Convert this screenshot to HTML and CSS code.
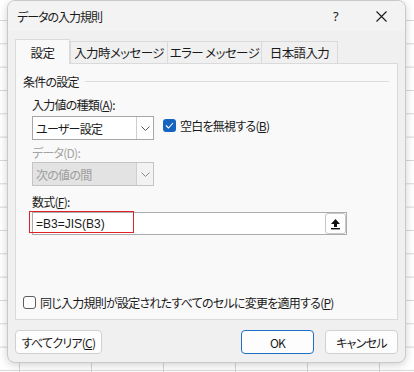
FILE: index.html
```html
<!DOCTYPE html>
<html lang="ja">
<head>
<meta charset="utf-8">
<title>データの入力規則</title>
<link rel="stylesheet" href="styles.css">
</head>
<body>
<div class="dialog">
  <div class="titlebar">
    <span class="title">データの入力規則</span>
    <span class="help">?</span>
    <svg class="close" width="11" height="11" viewBox="0 0 11 11"><path d="M0.5 0.5 L10.5 10.5 M10.5 0.5 L0.5 10.5" stroke="#1a1a1a" stroke-width="1.1" fill="none"/></svg>
  </div>
  <div class="body">
    <div class="tabs">
      <div class="tab active">設定</div>
      <div class="tab t2">入力時メッセージ</div>
      <div class="tab t3">エラー メッセージ</div>
      <div class="tab t4">日本語入力</div>
    </div>
    <div class="panel">
      <div class="legend"><span>条件の設定</span><span class="rule"></span></div>
      <div class="group">
        <div class="label l1">入力値の種類(<u>A</u>):</div>
        <div class="row">
          <div class="select">
            <span class="value">ユーザー設定</span>
            <span class="drop"><svg width="9" height="5" viewBox="0 0 9 5"><path d="M0.5 0.5 L4.5 4.5 L8.5 0.5" stroke="#555" stroke-width="1" fill="none"/></svg></span>
          </div>
          <label class="check on"><span class="box"><svg width="9" height="7" viewBox="0 0 9 7"><path d="M1 3.5 L3.5 6 L8 1" stroke="#fff" stroke-width="1.1" fill="none"/></svg></span><span>空白を無視する(<u>B</u>)</span></label>
        </div>
        <div class="label disabled l2">データ(D):</div>
        <div class="select dis">
          <span class="value">次の値の間</span>
          <span class="drop"><svg width="9" height="5" viewBox="0 0 9 5"><path d="M0.5 0.5 L4.5 4.5 L8.5 0.5" stroke="#8a8a8a" stroke-width="1" fill="none"/></svg></span>
        </div>
        <div class="label l3">数式(<u>F</u>):</div>
        <div class="formula">
          <span class="ftext">=B3=JIS(B3)</span>
          <span class="pick"><svg width="11" height="12" viewBox="0 0 11 12"><path d="M5.5 1 L10 6 L7 6 L7 9 L4 9 L4 6 L1 6 Z" fill="#111"/><rect x="1" y="10" width="9" height="1.4" fill="#111"/></svg></span>
          <span class="mark"></span>
        </div>
      </div>
      <label class="check off bottom"><span class="box"></span><span>同じ入力規則が設定されたすべてのセルに変更を適用する(<u>P</u>)</span></label>
    </div>
    <div class="buttons">
      <button class="btn clear">すべてクリア(<u>C</u>)</button>
      <span class="spacer"></span>
      <button class="btn ok">OK</button>
      <button class="btn cancel">キャンセル</button>
    </div>
  </div>
</div>
</body>
</html>
```

FILE: styles.css
```css
html, body {
  margin: 0;
  padding: 0;
}
body {
  width: 414px;
  height: 372px;
  overflow: hidden;
  background-color: #ffffff;
  background-image:
    linear-gradient(to right, #d6d6d6 1px, transparent 1px),
    linear-gradient(to bottom, #d6d6d6 1px, transparent 1px);
  background-size: 72px 100%, 100% 23.33px;
  background-position: 19px 0, 0 20px;
  font-family: "Noto Sans CJK JP", "Noto Sans", sans-serif;
  font-feature-settings: "palt";
  font-size: 12px;
  letter-spacing: -0.75px;
  color: #1a1a1a;
}
.dialog {
  position: absolute;
  left: 7px;
  top: 0;
  width: 397px;
  height: 361px;
  border: 1px solid #c9c9c9;
  border-radius: 8px;
  background: #f0f0f0;
  box-shadow: 0 2px 8px rgba(0,0,0,0.18);
  overflow: hidden;
  display: flex;
  flex-direction: column;
}
.titlebar {
  height: 30px;
  background: #f3f3f3;
  display: flex;
  align-items: center;
  padding-left: 9px;
  flex: none;
}
.title {
  font-size: 12px;
  letter-spacing: -1px;
  flex: 1;
}
.help {
  font-family: "Noto Sans", sans-serif;
  font-size: 13px;
  margin-right: 38px;
}
.close {
  margin-right: 18px;
}
.body {
  flex: 1;
  display: flex;
  flex-direction: column;
  padding: 8px 7px 8px 7px;
}
.tabs {
  display: flex;
  align-items: flex-end;
  height: 24px;
  position: relative;
  z-index: 1;
}
.tab {
  box-sizing: border-box;
  height: 22px;
  border: 1px solid #dadada;
  border-bottom: none;
  margin-left: -1px;
  display: flex;
  align-items: center;
  justify-content: center;
  background: #f0f0f0;
  font-size: 12.5px;
  letter-spacing: -0.6px;
}
.tab.active {
  height: 25px;
  margin-left: 0;
  margin-bottom: -1px;
  width: 55px;
  background: #f9f9f9;
  font-size: 12.5px;
}
.tab.t2 { width: 98px; margin-left: 0; }
.tab.t3 { width: 95px; }
.tab.t4 { width: 77px; }
.panel {
  box-sizing: border-box;
  height: 257px;
  border: 1px solid #dadada;
  background: #f9f9f9;
  display: flex;
  flex-direction: column;
  padding: 9px 8px 9px 7px;
}
.legend {
  display: flex;
  align-items: center;
  height: 16px;
  gap: 6px;
}
.rule {
  flex: 1;
  border-top: 1px solid #dcdcdc;
  margin-top: 1px;
}
.group {
  margin-left: 9px;
  display: flex;
  flex-direction: column;
  align-items: flex-start;
}
.label {
  height: 16px;
  line-height: 16px;
}
.label.l1 { margin-top: 8px; }
.label.l2 { margin-top: 5px; }
.label.l3 { margin-top: 8px; }
.disabled { color: #a3a3a3; }
.row {
  display: flex;
  align-items: flex-start;
  gap: 9px;
  margin-top: 3px;
}
.select {
  box-sizing: border-box;
  width: 122px;
  height: 24px;
  border: 1px solid #a6a6a6;
  background: #ffffff;
  display: flex;
  align-items: stretch;
}
.select .value {
  flex: 1;
  padding-left: 3px;
  display: flex;
  align-items: center;
}
.select .drop {
  width: 16px;
  border-left: 1px solid #cfcfcf;
  display: flex;
  align-items: center;
  justify-content: center;
  background: #ffffff;
}
.select.dis {
  margin-top: 1px;
  background: #e3e3e3;
  border-color: #c4c4c4;
  color: #9d9d9d;
}
.select.dis .drop {
  background: #f2f2f2;
  border-left-color: #cfcfcf;
}
.check {
  display: flex;
  align-items: center;
  gap: 4px;
  height: 16px;
}
.row .check {
  margin-top: 1px;
}
.box {
  box-sizing: border-box;
  width: 13px;
  height: 13px;
  border-radius: 3px;
  display: flex;
  align-items: center;
  justify-content: center;
}
.check.on .box {
  background: #1565c0;
}
.check.off .box {
  border: 1px solid #5c5c5c;
  background: #fdfdfd;
}
.formula {
  position: relative;
  box-sizing: border-box;
  width: 315px;
  height: 23px;
  margin-top: 2px;
  border: 1px solid #acacac;
  background: #ffffff;
  display: flex;
  align-items: center;
}
.ftext {
  flex: 1;
  padding-left: 3px;
  font-family: "Liberation Sans", Arial, sans-serif;
  font-size: 12px;
  letter-spacing: 0;
}
.pick {
  box-sizing: border-box;
  width: 21px;
  height: 21px;
  border: 1px solid #c6c6c6;
  border-radius: 3px;
  background: #ffffff;
  display: flex;
  align-items: center;
  justify-content: center;
}
.mark {
  position: absolute;
  left: -4px;
  top: -2px;
  width: 103px;
  height: 20px;
  border: 1.5px solid #e0202a;
}
.check.bottom {
  margin-top: auto;
  gap: 4px;
}
.buttons {
  display: flex;
  align-items: center;
  margin-top: 10px;
  gap: 11px;
}
.spacer { flex: 1; }
.btn {
  box-sizing: border-box;
  height: 24px;
  border: 1px solid #d0d0d0;
  border-radius: 4px;
  background: #fdfdfd;
  font-family: "Noto Sans CJK JP", "Noto Sans", sans-serif;
  font-feature-settings: "palt";
  font-size: 12px;
  letter-spacing: -0.75px;
  color: #1a1a1a;
  padding: 0;
}
.btn.clear { width: 87px; }
.btn.ok { width: 73px; border-color: #1f6fc4; }
.btn.cancel { width: 73px; }
```
